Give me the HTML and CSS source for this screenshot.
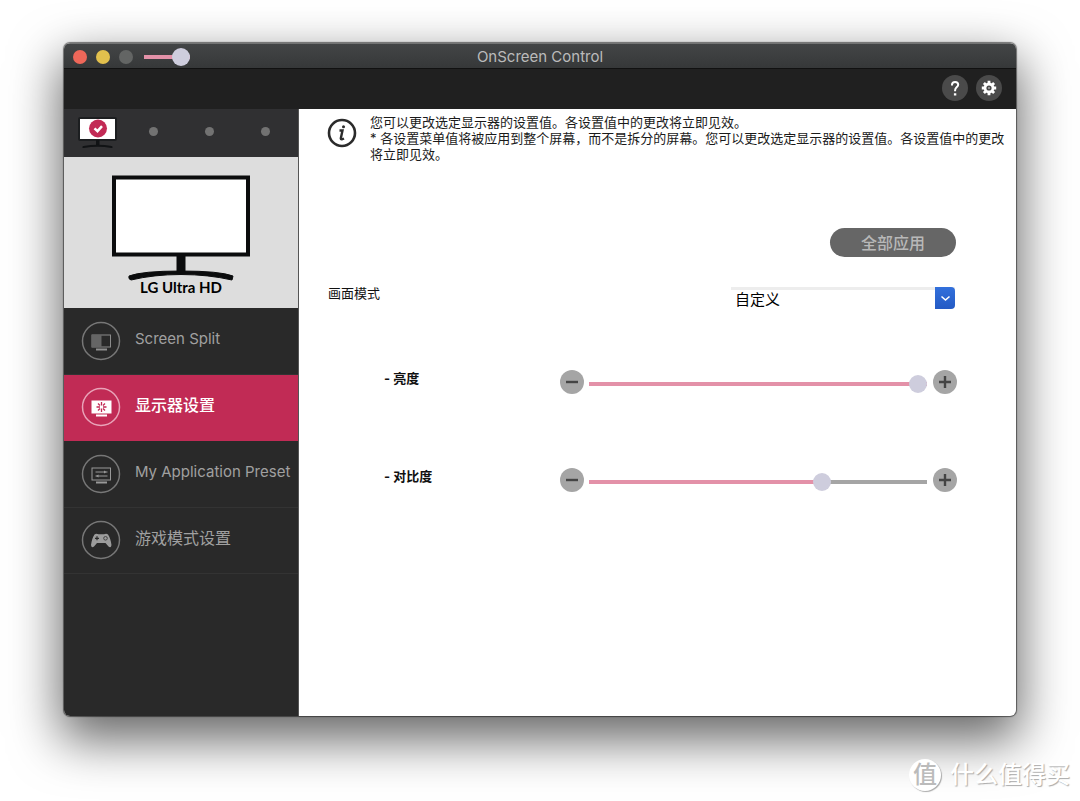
FILE: index.html
```html
<!DOCTYPE html>
<html lang="zh-CN">
<head>
<meta charset="utf-8">
<title>OnScreen Control</title>
<link rel="stylesheet" href="styles.css">
</head>
<body>
<div class="window">
  <header class="titlebar">
    <div class="titlebar-controls">
      <button class="light light-close" aria-label="关闭"></button>
      <button class="light light-min" aria-label="最小化"></button>
      <button class="light light-zoom" aria-label="缩放" disabled></button>
      <input class="slider slider-small" type="range" min="0" max="100" value="100" style="--value:100%" aria-label="标题滑块">
    </div>
    <h1 class="title">OnScreen Control</h1>
  </header>
  <div class="toolbar">
    <button class="tool" aria-label="帮助">
      <svg width="26" height="26" viewBox="0 0 26 26" fill="none" stroke="#fff" stroke-width="2"><path d="M10 10.4V9.800C10 8 11.200 7 13.100 7S16.200 8 16.200 9.800C16.200 12 13.100 12.300 13.100 15.200V16.200"/><path d="M13.100 18.200V20.600" stroke-width="2.400"/></svg>
    </button>
    <button class="tool" aria-label="设置">
      <svg width="26" height="26" viewBox="0 0 26 26"><g stroke="#fff" stroke-width="2.800"><path d="M13 5.800V20.200M5.800 13H20.200M7.900 7.900L18.100 18.100M18.100 7.900L7.900 18.100"/></g><circle cx="13" cy="13" r="5.400" fill="#fff"/><circle cx="13" cy="13" r="2.600" fill="#4a4a4a"/><circle cx="13" cy="13" r="1" fill="#aaa"/></svg>
    </button>
  </div>
  <div class="body">
    <aside class="sidebar">
      <div class="devices">
        <button class="device" aria-label="LG Ultra HD">
          <svg width="40" height="32" viewBox="0 0 40 32"><rect x="1" y="1" width="37" height="22" rx="1" fill="#fff" stroke="#1c1e20" stroke-width="2"/><path d="M18 23h3.500v5H18z" fill="#111315"/><path d="M5.500 30Q20 27.500 33.500 30" fill="none" stroke="#111315" stroke-width="2.200" stroke-linecap="round"/><circle cx="20" cy="11.500" r="9" fill="#c22a55"/><path d="M16.500 11.300L19.500 14.200L24 9.200" fill="none" stroke="#fff" stroke-width="2.500"/></svg>
        </button>
        <div class="dots"><span class="dot"></span><span class="dot"></span><span class="dot"></span></div>
      </div>
      <div class="preview">
        <svg width="138" height="106" viewBox="0 0 138 106"><rect x="2" y="2.500" width="134" height="77" fill="#fff" stroke="#0b0c0d" stroke-width="4"/><path d="M64.500 81h9v17h-9z" fill="#0b0c0d"/><path d="M17 101Q30 96 69 96T121 101L120 105Q96 99.500 69 99.500T19 105Q16 104 17 101z" fill="#0b0c0d" stroke="#0b0c0d" stroke-linejoin="round"/></svg>
        <p class="preview-name">LG Ultra HD</p>
      </div>
      <nav class="nav">
        <a class="nav-item" href="#split">
          <svg width="40" height="40" viewBox="0 0 40 40" fill="none"><circle cx="20" cy="20" r="18.500" stroke="#777" stroke-width="1.500"/><rect x="11" y="14" width="18.500" height="12" stroke="#8c8c8c"/><path d="M11 14h9.500v12H11z" fill="#656565"/><path d="M15 28.500h11" stroke="#909090" stroke-width="2"/></svg>
          <span class="nav-label" lang="en">Screen Split</span>
        </a>
        <a class="nav-item nav-item-active" href="#monitor" aria-current="page">
          <svg width="40" height="40" viewBox="0 0 40 40" fill="none"><circle cx="20" cy="20" r="18.500" stroke="#e9a3b8" stroke-width="1.500"/><path d="M10.500 13.500h20v13h-20z" fill="#fff"/><g stroke="#c22a55" stroke-width="1.300"><path d="M20.500 15v3.500M20.500 21.500v3.500M15.500 20h3.500M22 20h3.500M17 16.500l2 2M22 21.500l2 2M24 16.500l-2 2M19 21.500l-2 2"/></g><path d="M15 28.500h11" stroke="#fff" stroke-width="2"/></svg>
          <span class="nav-label">显示器设置</span>
        </a>
        <a class="nav-item" href="#preset">
          <svg width="40" height="40" viewBox="0 0 40 40" fill="none"><circle cx="20" cy="20" r="18.500" stroke="#777" stroke-width="1.500"/><rect x="11" y="14" width="18.500" height="12" stroke="#999"/><path d="M14.500 18h12M14.500 22h12" stroke="#999"/><path d="M23 16.500l2.500 1.500-2.500 1.500zM17.500 20.500L15 22l2.500 1.500z" fill="#999"/><path d="M15 28.500h11" stroke="#999" stroke-width="2"/></svg>
          <span class="nav-label" lang="en">My Application Preset</span>
        </a>
        <a class="nav-item" href="#game">
          <svg width="40" height="40" viewBox="0 0 40 40" fill="none"><circle cx="20" cy="20" r="18.500" stroke="#777" stroke-width="1.500"/><path d="M13.500 14.500Q15 13 17.500 14.200H23Q25.500 13 27 14.500Q29.500 18 30.500 25Q30 28.500 27.500 26.500L24.500 23H16L13 26.500Q10.500 28.500 10 25Q11 18 13.500 14.500z" fill="#9c9c9c"/><path d="M14 18.300h4M16 16.300v4" stroke="#2a2a2a" stroke-width="1.200"/><circle cx="24.500" cy="18.300" r="1.800" stroke="#444"/></svg>
          <span class="nav-label">游戏模式设置</span>
        </a>
      </nav>
    </aside>
    <main class="main">
      <section class="info">
        <svg class="info-icon" width="30" height="30" viewBox="0 0 30 30" fill="none" stroke="#2b2b2b"><circle cx="15" cy="15" r="13" stroke-width="2.600"/><path d="M12.500 12.500H15.500L13.800 20.500Q13.800 22 17 20.500" stroke-width="2.400"/><circle cx="16.500" cy="8.800" r="1.500" fill="#2b2b2b" stroke="none"/></svg>
        <p class="info-text">您可以更改选定显示器的设置值。各设置值中的更改将立即见效。<br>* 各设置菜单值将被应用到整个屏幕，而不是拆分的屏幕。您可以更改选定显示器的设置值。各设置值中的更改将立即见效。</p>
      </section>
      <div class="actions"><button class="apply">全部应用</button></div>
      <div class="mode">
        <label class="mode-label" for="mode">画面模式</label>
        <div class="picker">
          <select class="picker-select" id="mode"><option>自定义</option></select>
          <svg class="picker-arrow" width="20" height="22" viewBox="0 0 20 22" fill="none"><path d="M6.500 9.500L10.500 13L14.500 9.500" stroke="#fff" stroke-width="1.600"/></svg>
        </div>
      </div>
      <div class="setting">
        <label class="setting-label" for="brightness">- 亮度</label>
        <button class="step" aria-label="降低亮度"><svg width="24" height="24" viewBox="0 0 24 24" stroke="#444" stroke-width="2.400"><path d="M6 12h12"/></svg></button>
        <input class="slider" id="brightness" type="range" min="0" max="100" value="100" style="--value:100%">
        <button class="step" aria-label="提高亮度"><svg width="24" height="24" viewBox="0 0 24 24" stroke="#444" stroke-width="2.400"><path d="M6 12h12M12 6v12"/></svg></button>
      </div>
      <div class="setting">
        <label class="setting-label" for="contrast">- 对比度</label>
        <button class="step" aria-label="降低对比度"><svg width="24" height="24" viewBox="0 0 24 24" stroke="#444" stroke-width="2.400"><path d="M6 12h12"/></svg></button>
        <input class="slider" id="contrast" type="range" min="0" max="100" value="70" style="--value:70%">
        <button class="step" aria-label="提高对比度"><svg width="24" height="24" viewBox="0 0 24 24" stroke="#444" stroke-width="2.400"><path d="M6 12h12M12 6v12"/></svg></button>
      </div>
    </main>
  </div>
</div>
<div class="watermark"><span class="watermark-badge">值</span><span>什么值得买</span></div>
</body>
</html>
```
FILE: styles.css
```css
* { box-sizing: border-box; }

body {
  margin: 0;
  min-height: 100vh;
  padding: 43px 64px 85px;
  display: flex;
  flex-direction: column;
  background: #fff;
  color: #111;
  font-family: Inter, "Noto Sans CJK SC", sans-serif;
  overflow: hidden;
}

button { border: 0; padding: 0; font-family: inherit; }
svg { display: block; flex: none; }
h1, p { margin: 0; }

.window {
  flex: 1;
  display: flex;
  flex-direction: column;
  border-radius: 6px;
  overflow: hidden;
  background: #fff;
  box-shadow: 0 0 1px 1px rgba(0, 0, 0, .5), 0 20px 50px 4px rgba(0, 0, 0, .6);
}

.titlebar {
  display: grid;
  grid-template-columns: 1fr auto 1fr;
  align-items: center;
  height: 26px;
  padding: 1px 9px 0;
  background: linear-gradient(#434546, #363839);
  border-top: 1px solid #737474;
  border-bottom: 1px solid #111;
}
.titlebar-controls { display: flex; align-items: center; gap: 9px; }
.title { font-size: 15px; line-height: 20px; font-weight: 400; color: #bbb; }
.light { width: 14px; height: 14px; border-radius: 50%; }
.light-close { background: #ee6759; }
.light-min { background: #e2c04d; }
.light-zoom { background: #636564; }

.slider {
  appearance: none;
  flex: 1;
  min-width: 0;
  height: 18px;
  margin: 0;
  background: linear-gradient(to right, #e391a8 var(--value), #a5a5a5 var(--value)) center / 100% 4px no-repeat;
}
.slider::-webkit-slider-thumb {
  appearance: none;
  width: 18px;
  height: 18px;
  border-radius: 50%;
  background: #cecddd;
}
.slider-small { flex: none; width: 46px; margin-left: 2px; }

.toolbar {
  display: flex;
  align-items: center;
  justify-content: flex-end;
  gap: 8px;
  height: 40px;
  padding: 0 14px 2px 0;
  background: #202020;
}
.tool { width: 26px; height: 26px; border-radius: 50%; background: #4a4a4a; }

.body { flex: 1; display: flex; }

.sidebar { width: 235px; flex: none; background: #292929; border-right: 1px solid #555; }
.devices { display: flex; align-items: center; gap: 31px; height: 48px; padding-left: 14px; background: #303032; }
.device { background: none; }
.dots { display: flex; gap: 47px; padding-bottom: 4px; }
.dot { width: 9px; height: 9px; border-radius: 50%; background: #727272; }

.preview {
  display: flex;
  flex-direction: column;
  align-items: center;
  height: 151px;
  padding-top: 18px;
  background: #ddd;
}
.preview-name { font: 700 15px/12px Lato, sans-serif; color: #000; }

.nav { display: grid; grid-auto-rows: 1fr; height: 266px; }
.nav-item {
  display: flex;
  align-items: center;
  gap: 14px;
  padding-left: 17px;
  color: #a0a0a0;
  font-size: 16px;
  text-decoration: none;
  white-space: nowrap;
  border-bottom: 1px solid #333;
}
.nav-label { line-height: 24px; padding-bottom: 4px; }
.nav-label:lang(en) { font-size: 15px; }
.nav-item-active { background: #c12b55; color: #fff; font-weight: 500; border-color: #c12b55; }

.main { flex: 1; min-width: 0; padding: 5px 10px 0 28px; }
.info { display: flex; gap: 13px; min-height: 114px; }
.info-icon { margin-top: 4px; }
.info-text { font-size: 13px; line-height: 16px; color: #1a1a1a; }

.actions { display: flex; justify-content: flex-end; padding-right: 50px; }
.apply {
  width: 126px;
  height: 29px;
  border-radius: 15px;
  background: #666;
  color: #b8b8b8;
  font-size: 16px;
  font-weight: 500;
  line-height: 26px;
}

.mode { display: flex; justify-content: space-between; margin-top: 28px; padding: 0 51px 0 1px; }
.mode-label { font-size: 13px; line-height: 16px; }
.picker { position: relative; width: 224px; margin-top: 2px; }
.picker-select {
  appearance: none;
  display: block;
  width: 100%;
  height: 23px;
  padding: 0 24px 0 4px;
  border: 0;
  border-top: 3px solid #ededed;
  border-radius: 0;
  background: #fff;
  color: #000;
  font: 15px/20px Inter, "Noto Sans CJK SC", sans-serif;
}
.picker-arrow {
  position: absolute;
  top: 0;
  right: 0;
  pointer-events: none;
  border-radius: 0 4px 4px 0;
  background: linear-gradient(#3270dc, #245ac4);
}

.setting {
  display: flex;
  align-items: center;
  margin-top: 60px;
  padding: 0 49px 0 57px;
}
.setting + .setting { margin-top: 74px; }
.setting-label { width: 176px; padding-bottom: 8px; font-size: 13px; line-height: 16px; font-weight: 700; }
.setting .slider { margin: 4px 6px 0 5px; }
.step { width: 24px; height: 24px; border-radius: 50%; background: #a5a5a5; }

.watermark {
  position: absolute;
  right: 10px;
  bottom: 10px;
  display: flex;
  align-items: center;
  gap: 9px;
  color: #fff;
  font-size: 24px;
  font-weight: 500;
  line-height: 32px;
  text-shadow: 1px 1px 1px #aaa;
}
.watermark-badge {
  width: 32px;
  height: 32px;
  border-radius: 50%;
  background: #fff;
  box-shadow: 1px 1px 1px #aaa;
  color: #bbb;
  text-align: center;
  text-shadow: none;
}
```
